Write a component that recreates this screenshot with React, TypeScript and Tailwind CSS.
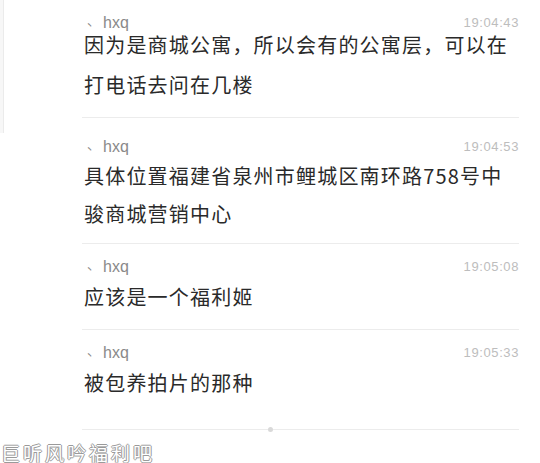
import React from "react";

interface Message {
  time: string;
  lines: string[];
  boxClass: string;
  textClass: string;
}

const messages: Message[] = [
  {
    time: "19:04:43",
    lines: ["因为是商城公寓，所以会有的公寓层，可以在", "打电话去问在几楼"],
    boxClass: "h-[118px] pt-[13px]",
    textClass: "-mt-[8px] leading-[40px]",
  },
  {
    time: "19:04:53",
    lines: ["具体位置福建省泉州市鲤城区南环路758号中", "骏商城营销中心"],
    boxClass: "h-[126px] pt-[19px]",
    textClass: "mt-[0px] leading-[38px]",
  },
  {
    time: "19:05:08",
    lines: ["应该是一个福利姬"],
    boxClass: "h-[86px] pt-[13px]",
    textClass: "mt-[0px] leading-[40px]",
  },
  {
    time: "19:05:33",
    lines: ["被包养拍片的那种"],
    boxClass: "h-[100px] pt-[13px]",
    textClass: "mt-[0px] leading-[40px]",
  },
];

const ChatItem = ({ time, lines, boxClass, textClass }: Message) => {
  return (
    <div className={`border-b border-[#ececec] ${boxClass}`}>
      <div className="flex h-[20px] items-center justify-between">
        <div className="flex items-center pl-[5px] text-[#8a8a8a]">
          <span className="text-[13px] font-['Noto_Sans_CJK_SC',sans-serif] leading-[20px] -translate-y-[3px]">
            、
          </span>
          <span className="ml-[3px] text-[16px] font-['Liberation_Sans',sans-serif] leading-[20px]">
            hxq
          </span>
        </div>
        <span className="text-[13px] tracking-[0.6px] text-[#bdbdbd] font-['Liberation_Sans',sans-serif] leading-[20px]">
          {time}
        </span>
      </div>
      <div
        className={`pl-[2px] text-[20px] tracking-[1.2px] text-[#2a2a2a] font-['Noto_Sans_CJK_SC',sans-serif] ${textClass}`}
      >
        {lines.map((line) => (
          <p key={line}>{line}</p>
        ))}
      </div>
    </div>
  );
};

export default function App() {
  return (
    <div className="relative flex h-[463px] w-[540px] overflow-hidden bg-white">
      <div className="h-[133px] w-[4px] shrink-0 border-r border-[#ebebeb] bg-[#f7f7f7]" />
      <div className="ml-[78px] w-[437px]">
        {messages.map((m) => (
          <ChatItem key={m.time} {...m} />
        ))}
        <div className="-mt-[3px] flex pl-[186px]">
          <span className="h-[5px] w-[5px] rounded-full bg-[#d9d9d9]" />
        </div>
      </div>
      <div className="absolute bottom-0 left-[1px] text-[19px] leading-[20px] tracking-[3px] text-white font-['Noto_Sans_CJK_SC',sans-serif] [text-shadow:1px_0_#9a9a9a,-1px_0_#9a9a9a,0_1px_#9a9a9a,0_-1px_#9a9a9a]">
        巨听风吟福利吧
      </div>
    </div>
  );
}
